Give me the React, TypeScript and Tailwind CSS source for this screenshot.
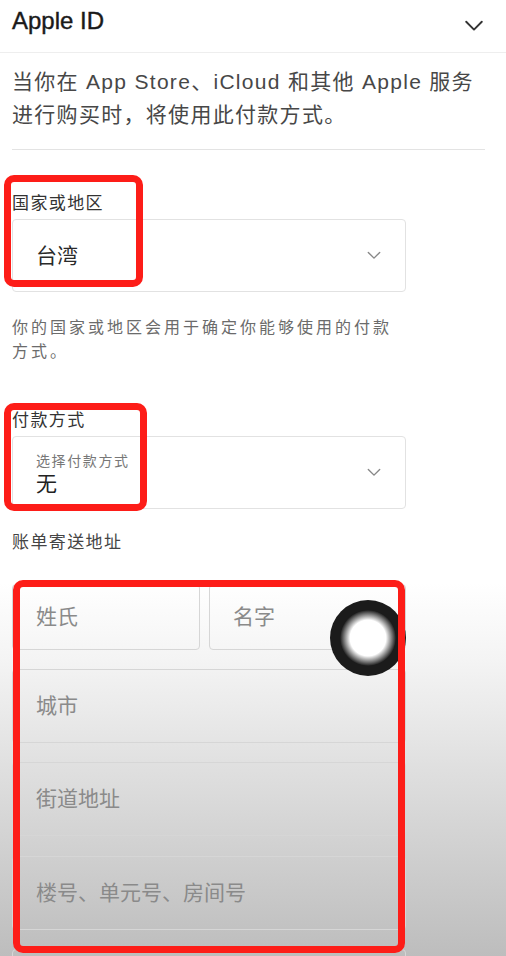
import React from 'react'

const font = { fontFamily: '"Liberation Sans", "Noto Sans CJK SC", sans-serif' }

function Chevron({ className }: { className?: string }) {
  return (
    <svg viewBox="0 0 16 10" className={className} fill="none" stroke="currentColor" strokeWidth="1.6" strokeLinecap="round" strokeLinejoin="round">
      <polyline points="1.5,1.5 8,8 14.5,1.5" />
    </svg>
  )
}

function Field({ label, className }: { label: string; className?: string }) {
  return (
    <div className={`flex items-center rounded-[4px] border border-[#d6d6d6] pl-[23px] text-[21px] text-[#8a8a8a] ${className ?? ''}`}>
      {label}
    </div>
  )
}

export default function App() {
  return (
    <div
      className="relative h-[956px] w-[506px] overflow-hidden bg-[linear-gradient(to_bottom,#ffffff_0%,#ffffff_61%,#f4f4f4_69%,#e0e0e0_80%,#cbcbcb_92%,#bdbdbd_100%)] text-[#222]"
      style={font}
    >
      {/* header */}
      <div className="flex h-[53px] items-start justify-between border-b border-[#eeeeee] pl-3 pr-[21px] pt-[6px]">
        <span className="text-[24px] leading-[30px] text-[#1a1a1a] [-webkit-text-stroke:0.4px_#1a1a1a]">Apple ID</span>
        <Chevron className="mt-[14px] h-[12px] w-[22px] text-[#333]" />
      </div>

      <p className="px-3 pt-[12px] text-[21px] leading-[33px] tracking-[1.3px] text-[#474747]">
        当你在 App Store、iCloud 和其他 Apple 服务
        <br />
        进行购买时，将使用此付款方式。
      </p>

      <div className="ml-3 mr-[21px] mt-[18px] h-px bg-[#e3e3e3]" />

      {/* country */}
      <div className="mt-[42px] pl-3 text-[17px] leading-[24px] tracking-[1.4px] text-[#333]">国家或地区</div>
      <div className="ml-3 mt-[3px] flex h-[73px] w-[394px] items-center justify-between rounded-[4px] border border-[#e2e2e2] pl-[23px] pr-[24px]">
        <span className="text-[21px] text-[#2a2a2a]">台湾</span>
        <Chevron className="h-[9px] w-[14px] text-[#888]" />
      </div>
      <p className="mt-[24px] pl-3 pr-[100px] text-[16px] leading-[24px] tracking-[3px] text-[#6b6b6b]">
        你的国家或地区会用于确定你能够使用的付款方式。
      </p>

      {/* payment */}
      <div className="mt-[45px] pl-3 text-[17px] leading-[24px] tracking-[1.4px] text-[#333]">付款方式</div>
      <div className="ml-3 mt-[3px] flex h-[73px] w-[394px] items-center justify-between rounded-[4px] border border-[#e2e2e2] pl-[23px] pr-[24px]">
        <div className="flex flex-col pt-[4px]">
          <span className="text-[14px] leading-[18px] tracking-[1.6px] text-[#777]">选择付款方式</span>
          <span className="text-[21px] leading-[28px] text-[#222]">无</span>
        </div>
        <Chevron className="h-[9px] w-[14px] text-[#888]" />
      </div>

      <div className="mt-[22px] pl-3 text-[17px] leading-[24px] tracking-[1.4px] text-[#444]">账单寄送地址</div>

      {/* billing address fields */}
      <div className="ml-3 mt-[29px] flex w-[394px] flex-col">
        <div className="flex h-[66px] gap-[9px]">
          <Field label="姓氏" className="w-[188px]" />
          <Field label="名字" className="flex-1" />
        </div>
        <Field label="城市" className="mt-[19px] h-[74px]" />
        <Field label="街道地址" className="mt-[19px] h-[74px]" />
        <Field label="楼号、单元号、房间号" className="mt-[20px] h-[74px]" />
        <Field label="" className="mt-[19px] h-[74px]" />
      </div>

      {/* touch cursor */}
      <div className="absolute left-[330px] top-[600px] flex h-[76px] w-[76px] items-center justify-center rounded-full bg-[#1b1b1b]">
        <div className="h-[56px] w-[56px] rounded-full bg-[radial-gradient(circle_closest-side,#ffffff_0%,#ffffff_64%,#d8d8d8_70%,#9a9a9a_80%,#555555_91%,#1b1b1b_100%)]" />
      </div>

      {/* red annotation boxes */}
      <div className="absolute left-[4px] top-[175px] h-[112px] w-[139px] rounded-[10px] border-[7px] border-[#fd1d18]" />
      <div className="absolute left-[4px] top-[403px] h-[108px] w-[143px] rounded-[10px] border-[7px] border-[#fd1d18]" />
      <div className="absolute left-[13px] top-[580px] h-[373px] w-[392px] rounded-[10px] border-[7px] border-[#fd1d18]" />
    </div>
  )
}
